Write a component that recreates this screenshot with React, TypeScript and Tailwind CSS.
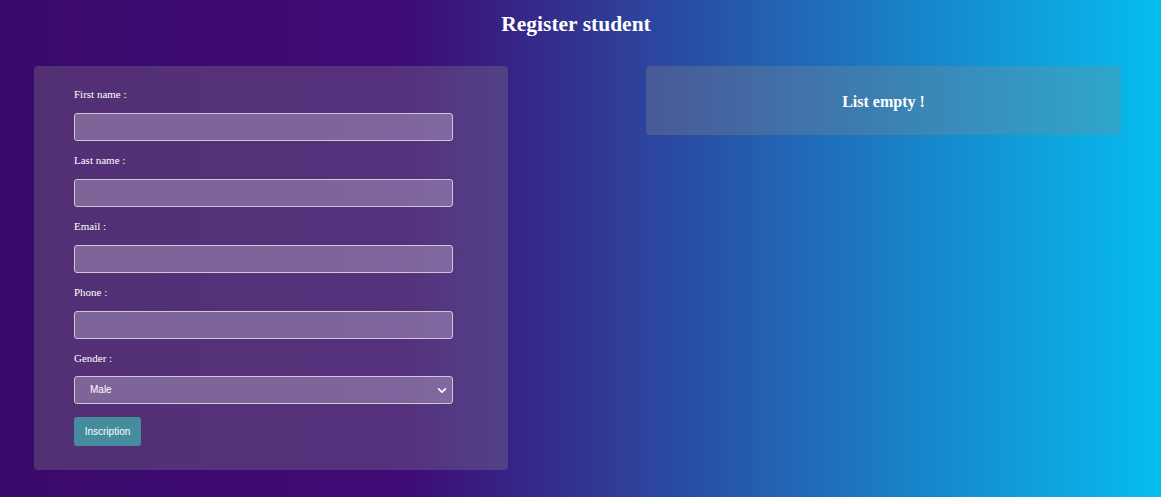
import React from "react";

const fields = ["First name :", "Last name :", "Email :", "Phone :"];

export default function App() {
  return (
    <div
      className="min-h-screen w-full bg-[linear-gradient(to_right,#3a0a6a_0%,#3f0b76_35%,#05bdf0_100%)] pb-[28px] text-white"
      style={{ fontFamily: '"Liberation Serif", "Times New Roman", serif' }}
    >
      <h1 className="pr-[9px] pt-[12px] text-center text-[21.5px] font-bold leading-[24px]">Register student</h1>
      <div className="mt-[30px] flex items-start justify-between pl-[34px] pr-[40px]">
        <form className="w-[474px] rounded-[4px] bg-[rgba(140,140,140,0.3)] pb-[24px] pl-[40px] pt-[22px]">
          {fields.map((f) => (
            <div key={f} className="mb-[13px]">
              <label className="mb-[12px] block text-[11px] leading-[13px]">{f}</label>
              <input
                type="text"
                className="block h-[28px] w-[379px] rounded-[3px] border border-[#cfc6d8] bg-white/25 outline-none"
              />
            </div>
          ))}
          <div>
            <label className="mb-[11px] block text-[11px] leading-[13px]">Gender :</label>
            <div className="relative h-[28px] w-[379px] rounded-[3px] border border-[#cfc6d8] bg-white/25">
              <span
                className="absolute left-[15px] top-[6px] text-[10px] leading-[14px]"
                style={{ fontFamily: '"Liberation Sans", Arial, sans-serif' }}
              >
                Male
              </span>
              <svg
                className="absolute right-[5px] top-[9px]"
                width="10"
                height="9"
                viewBox="0 0 16 16"
                fill="none"
                stroke="white"
                strokeWidth="3"
                strokeLinecap="round"
                strokeLinejoin="round"
              >
                <path d="M2 5l6 6 6-6" />
              </svg>
            </div>
          </div>
          <button
            type="button"
            className="mt-[13px] block h-[29px] w-[67px] rounded-[3px] bg-[#458d9c] text-[10px] text-white"
            style={{ fontFamily: '"Liberation Sans", Arial, sans-serif' }}
          >
            Inscription
          </button>
        </form>
        <div className="flex h-[69px] w-[475px] items-center justify-center rounded-[4px] bg-[rgba(140,140,140,0.3)] pt-[2px]">
          <h3 className="text-[16px] font-bold">List empty !</h3>
        </div>
      </div>
    </div>
  );
}
